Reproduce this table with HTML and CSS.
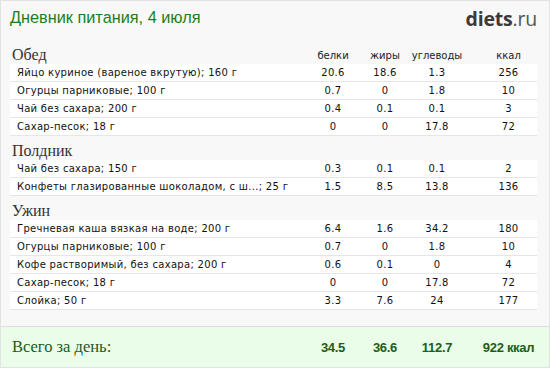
FILE: index.html
```html
<!DOCTYPE html>
<html lang="ru">
<head>
<meta charset="utf-8">
<title>Дневник питания</title>
<link rel="stylesheet" href="styles.css">
</head>
<body>
<div class="page">
  <header class="header">
    <h1 class="title">Дневник питания, 4 июля</h1>
    <div class="logo"><b>diets</b>.ru</div>
  </header>

  <div class="meals">
    <section class="meal">
      <div class="grid meal-head">
        <div class="meal-name">Обед</div>
        <div class="col">белки</div>
        <div class="col">жиры</div>
        <div class="col">углеводы</div>
        <div class="col kcal">ккал</div>
      </div>
      <div class="grid row"><div class="name">Яйцо куриное (вареное вкрутую); 160 г</div><div class="col">20.6</div><div class="col">18.6</div><div class="col">1.3</div><div class="col kcal">256</div></div>
      <div class="grid row"><div class="name">Огурцы парниковые; 100 г</div><div class="col">0.7</div><div class="col">0</div><div class="col">1.8</div><div class="col kcal">10</div></div>
      <div class="grid row"><div class="name">Чай без сахара; 200 г</div><div class="col">0.4</div><div class="col">0.1</div><div class="col">0.1</div><div class="col kcal">3</div></div>
      <div class="grid row"><div class="name">Сахар-песок; 18 г</div><div class="col">0</div><div class="col">0</div><div class="col">17.8</div><div class="col kcal">72</div></div>
    </section>

    <section class="meal">
      <div class="grid meal-head">
        <div class="meal-name">Полдник</div>
      </div>
      <div class="grid row"><div class="name">Чай без сахара; 150 г</div><div class="col">0.3</div><div class="col">0.1</div><div class="col">0.1</div><div class="col kcal">2</div></div>
      <div class="grid row"><div class="name">Конфеты глазированные шоколадом, с ш...; 25 г</div><div class="col">1.5</div><div class="col">8.5</div><div class="col">13.8</div><div class="col kcal">136</div></div>
    </section>

    <section class="meal">
      <div class="grid meal-head">
        <div class="meal-name">Ужин</div>
      </div>
      <div class="grid row"><div class="name">Гречневая каша вязкая на воде; 200 г</div><div class="col">6.4</div><div class="col">1.6</div><div class="col">34.2</div><div class="col kcal">180</div></div>
      <div class="grid row"><div class="name">Огурцы парниковые; 100 г</div><div class="col">0.7</div><div class="col">0</div><div class="col">1.8</div><div class="col kcal">10</div></div>
      <div class="grid row"><div class="name">Кофе растворимый, без сахара; 200 г</div><div class="col">0.6</div><div class="col">0.1</div><div class="col">0</div><div class="col kcal">4</div></div>
      <div class="grid row"><div class="name">Сахар-песок; 18 г</div><div class="col">0</div><div class="col">0</div><div class="col">17.8</div><div class="col kcal">72</div></div>
      <div class="grid row"><div class="name">Слойка; 50 г</div><div class="col">3.3</div><div class="col">7.6</div><div class="col">24</div><div class="col kcal">177</div></div>
    </section>
  </div>

  <footer class="total">
    <div class="grid total-grid">
      <div class="total-label">Всего за день:</div>
      <div class="col">34.5</div>
      <div class="col">36.6</div>
      <div class="col">112.7</div>
      <div class="col kcal">922 ккал</div>
    </div>
  </footer>
</div>
</body>
</html>
```

FILE: styles.css
```css
* { box-sizing: border-box; }

html, body {
  margin: 0;
  padding: 0;
}

.page {
  width: 550px;
  height: 368px;
  border: 1px solid #e2e2e2;
  background: #f8f8f8;
  display: flex;
  flex-direction: column;
}

.header {
  height: 45px;
  padding: 6px 12px 0 9px;
  display: flex;
  justify-content: space-between;
  align-items: flex-start;
}

.title {
  margin: 0;
  font-family: "Liberation Sans", Arial, sans-serif;
  font-weight: normal;
  font-size: 16.3px;
  line-height: 20px;
  color: #1a7f1a;
}

.logo {
  font-family: "Open Sans", "Liberation Sans", sans-serif;
  font-size: 19.5px;
  line-height: 20px;
  color: #555;
  padding-top: 2px;
  letter-spacing: -0.2px;
}

.logo b {
  color: #3a3a3a;
  font-weight: 700;
}

.meals {
  padding: 0 12px 0 9px;
  flex: 1;
}

.meal + .meal {
  margin-top: 6px;
}

.grid {
  display: grid;
  grid-template-columns: 1fr 52px 52px 52px 74px;
  align-items: center;
}

.col {
  text-align: center;
}

.kcal {
  padding-left: 17px;
}

.meal-head {
  height: 18px;
  font-family: "DejaVu Sans", Verdana, sans-serif;
  font-size: 10px;
  color: #222;
}

.meal-name {
  font-family: "Liberation Serif", "Times New Roman", serif;
  font-size: 16px;
  line-height: 18px;
  color: #333;
  padding-left: 2px;
}

.row {
  height: 18px;
  background: #fff;
  border-bottom: 1px solid #e6e6e6;
  font-family: "DejaVu Sans", Verdana, sans-serif;
  font-size: 10px;
  color: #111;
  letter-spacing: 0.3px;
}

.name {
  padding-left: 7px;
  white-space: nowrap;
  overflow: hidden;
}

.total {
  height: 41px;
  background: #e9fde9;
  border-top: 1px solid #dedede;
  padding: 0 12px 0 9px;
  display: flex;
  align-items: center;
}

.total-grid {
  width: 100%;
  font-family: "Liberation Sans", Arial, sans-serif;
  font-weight: bold;
  font-size: 13px;
  color: #1b5e1b;
  letter-spacing: -0.3px;
}

.total-label {
  font-family: "Liberation Serif", "Times New Roman", serif;
  font-weight: normal;
  font-size: 16.5px;
  letter-spacing: 0;
  padding-left: 2px;
  color: #1b5a1b;
}
```
